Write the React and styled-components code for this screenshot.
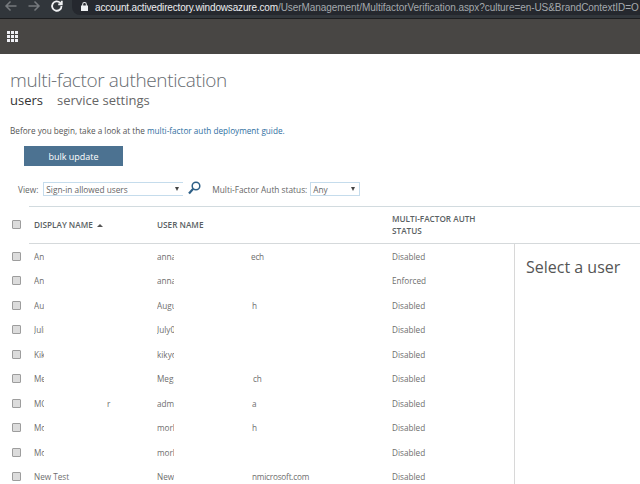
import React from "react";
import styled, { createGlobalStyle } from "styled-components";

const Global = createGlobalStyle`
  html, body { margin: 0; padding: 0; background: #fff; }
  body { width: 640px; height: 484px; overflow: hidden; font-family: "Open Sans", "Noto Sans", sans-serif; }
`;

const Page = styled.div`
  width: 640px;
  height: 484px;
  overflow: hidden;
  display: flex;
  flex-direction: column;
`;

const BrowserBar = styled.div`
  height: 19px;
  flex: none;
  background: #31363b;
  border-bottom: 1px solid #1c1d1f;
  box-sizing: border-box;
  display: flex;
  align-items: flex-start;
  padding-left: 4px;
  gap: 9px;
  overflow: hidden;
`;

const NavIcon = styled.svg`
  width: 14px;
  height: 14px;
  margin-top: 0;
  flex: none;
  fill: none;
  stroke: ${(p) => p.$color};
  stroke-width: ${(p) => p.$weight};
`;

const AddressBar = styled.div`
  height: 15px;
  margin-left: -1px;
  flex: 1;
  min-width: 0;
  background: #25282e;
  border-radius: 0 0 0 8px;
  display: flex;
  align-items: center;
  padding-left: 9px;
  white-space: nowrap;
  font-family: "Liberation Sans", sans-serif;
  font-size: 10px;
  letter-spacing: -0.06px;
  color: #a4a8ad;
  overflow: hidden;
`;

const Lock = styled.svg`
  width: 7px;
  height: 9px;
  flex: none;
  margin: -2px 7px 0 0;
  fill: #eef0f2;
`;

const Host = styled.span`
  color: #eceef0;
  letter-spacing: -0.16px;
`;

const TopBar = styled.div`
  height: 35px;
  flex: none;
  background: #484644;
  display: flex;
  align-items: center;
  padding-left: 7px;
`;

const Waffle = styled.div`
  display: grid;
  grid-template-columns: repeat(3, 3px);
  grid-auto-rows: 3px;
  gap: 1px;
  & > i { background: #efeff4; display: block; }
`;

const Content = styled.div`
  flex: 1;
  min-height: 0;
  display: flex;
  flex-direction: column;
  background: #fff;
`;

const Title = styled.h1`
  margin: 16px 0 0 10px;
  font-weight: 300;
  font-size: 19px;
  letter-spacing: -0.37px;
  line-height: 20px;
  color: #666b70;
`;

const Tabs = styled.div`
  display: flex;
  gap: 14px;
  margin: 0 0 0 10px;
  height: 19px;
  align-items: center;
`;

const Tab = styled.span`
  font-size: 13px;
  line-height: 18px;
  font-weight: 400;
  color: ${(p) => (p.$active ? "#333" : "#666")};
`;

const Intro = styled.p`
  margin: 16px 0 0 10px;
  font-size: 8.2px;
  line-height: 12px;
  color: #555;
`;

const Guide = styled.a`
  color: #2f6f9f;
`;

const BulkButton = styled.button`
  margin: 9px 0 0 24px;
  width: 99px;
  height: 20px;
  padding: 0;
  border: 0;
  background: #4c7291;
  color: #fff;
  font: 400 9px "Open Sans", sans-serif;
`;

const Filters = styled.div`
  display: flex;
  align-items: center;
  margin: 15px 0 0 18px;
  height: 16px;
  font-size: 8.3px;
  color: #666;
`;

const Select = styled.div`
  box-sizing: border-box;
  width: ${(p) => p.$w}px;
  height: 14px;
  margin-left: ${(p) => p.$ml}px;
  border: 1px solid #c5dcec;
  ${(p) => p.$open && "border-right: 0;"}
  display: flex;
  align-items: center;
  justify-content: space-between;
  padding: 0 4px 0 2px;
  color: #666;
`;

const Caret = styled.span`
  width: 0;
  height: 0;
  border-left: 2.5px solid transparent;
  border-right: 2.5px solid transparent;
  border-top: 4px solid #444;
`;

const Magnifier = styled.svg`
  width: 13px;
  height: 14px;
  margin: -3px 11px 0 5px;
  fill: none;
  stroke: #2d5f86;
  stroke-width: 1.5;
  flex: none;
`;

const TableHead = styled.div`
  margin: 9px 0 0 29px;
  height: 38px;
  flex: none;
  border-top: 1px solid #d2dbdf;
  border-bottom: 1px solid #d5d9db;
  display: grid;
  grid-template-columns: 5px 123px 235px 1fr;
  align-items: center;
  font-size: 8.2px;
  font-weight: 600;
  color: #5a5f63;
  box-sizing: border-box;
  position: relative;
`;

const HeadLabel = styled.span`
  line-height: 12px;
  display: flex;
  align-items: center;
  gap: 4px;
`;

const StackLabel = styled.span`
  line-height: 12px;
`;

const SortCaret = styled.span`
  width: 0;
  height: 0;
  border-left: 3px solid transparent;
  border-right: 3px solid transparent;
  border-bottom: 3px solid #555;
`;

const Box = styled.span`
  display: block;
  box-sizing: border-box;
  width: 9px;
  height: 9px;
  border: 1px solid #9d9d9d;
  border-radius: 1px;
  background: #dcdcdc;
  flex: none;
`;

const HeadBox = styled(Box)`
  position: absolute;
  left: -17px;
  top: 13px;
`;

const Body = styled.div`
  flex: 1;
  min-height: 0;
  display: flex;
`;

const Rows = styled.div`
  width: 515px;
  flex: none;
  box-sizing: border-box;
  border-right: 1px solid #d8d8d8;
`;

const Row = styled.div`
  height: 24.5px;
  display: grid;
  grid-template-columns: 34px 123px 235px 1fr;
  align-items: center;
  font-size: 8.2px;
  color: #6e6e6e;
`;

const BoxCell = styled.div`
  padding-left: 12px;
`;

const Cell = styled.div`
  display: flex;
  white-space: nowrap;
`;

const Clip = styled.span`
  width: ${(p) => p.$w}px;
  overflow: hidden;
  flex: none;
`;

const Tail = styled.span`
  margin-left: ${(p) => p.$gap}px;
  letter-spacing: -0.2px;
`;

const Side = styled.div`
  flex: 1;
  padding: 12px 0 0 11px;
  font-size: 16px;
  line-height: 22px;
  color: #555;
  white-space: nowrap;
  overflow: hidden;
`;

const users = [
  { n: "Anna Smith", u: "annasmith", t: "ech", g: 77, s: "Disabled" },
  { n: "Anna Jones", u: "annajones", s: "Enforced" },
  { n: "August Lee", u: "August", t: "h", g: 78, s: "Disabled" },
  { n: "Julia Ray", u: "July001", s: "Disabled" },
  { n: "Kiko Dean", u: "kikyou", s: "Disabled" },
  { n: "Megan Bowen", u: "MeganB", t: "ch", g: 79, s: "Disabled" },
  { n: "MOD Admin", nt: "r", u: "admin01", t: "a", g: 78, s: "Disabled" },
  { n: "Morgan Hill", u: "morlan", t: "h", g: 78, s: "Disabled" },
  { n: "Morgan Dale", u: "morlan", s: "Disabled" },
  { n: "New Test", full: true, u: "NewTest", t: "nmicrosoft.com", g: 78, s: "Disabled" },
];

export default function App() {
  return (
    <Page>
      <Global />
      <BrowserBar>
        <NavIcon $color="#767a7e" $weight="1.5" viewBox="0 0 14 14"><path d="M12.500 6H2M6.500 1.500 2 6l4.500 4.500" /></NavIcon>
        <NavIcon $color="#767a7e" $weight="1.5" viewBox="0 0 14 14"><path d="M1.500 6H12M7.500 1.500 12 6l-4.500 4.500" /></NavIcon>
        <NavIcon $color="#f0f1f3" $weight="1.8" viewBox="0 0 14 14"><path d="M11.500 6a4.700 4.700 0 1 1-1.400-3.300L11.500 4M11.800 .8v3.600H8.200" /></NavIcon>
        <AddressBar>
          <Lock viewBox="0 0 7 9"><path d="M0 3.500h7V9H0zM1.200 3.500V2.300a2.300 2.300 0 0 1 4.600 0v1.200h-1V2.300a1.300 1.300 0 0 0-2.600 0v1.200z" /></Lock>
          <Host>account.activedirectory.windowsazure.com</Host>
          /UserManagement/MultifactorVerification.aspx?culture=en-US&amp;BrandContextID=O
        </AddressBar>
      </BrowserBar>
      <TopBar>
        <Waffle>{Array.from({ length: 9 }, (_, i) => <i key={i} />)}</Waffle>
      </TopBar>
      <Content>
        <Title>multi-factor authentication</Title>
        <Tabs>
          <Tab $active>users</Tab>
          <Tab>service settings</Tab>
        </Tabs>
        <Intro>Before you begin, take a look at the <Guide>multi-factor auth deployment guide.</Guide></Intro>
        <BulkButton>bulk update</BulkButton>
        <Filters>
          View:
          <Select $w={140} $ml={5} $open>Sign-in allowed users<Caret /></Select>
          <Magnifier viewBox="0 0 13 14"><circle cx="8" cy="5" r="3.800" /><path d="M5.200 7.800 1 12.500" strokeWidth="2.200" /></Magnifier>
          Multi-Factor Auth status:
          <Select $w={50} $ml={3}>Any<Caret /></Select>
        </Filters>
        <TableHead>
          <HeadBox />
          <span />
          <HeadLabel>DISPLAY NAME <SortCaret /></HeadLabel>
          <HeadLabel>USER NAME</HeadLabel>
          <StackLabel>MULTI-FACTOR AUTH<br />STATUS</StackLabel>
        </TableHead>
        <Body>
          <Rows>
            {users.map((x, i) => (
              <Row key={i}>
                <BoxCell><Box /></BoxCell>
                <Cell>
                  {x.full ? x.n : <Clip $w={10}>{x.n}</Clip>}
                  {x.nt && <Tail $gap={63}>{x.nt}</Tail>}
                </Cell>
                <Cell>
                  <Clip $w={17}>{x.u}</Clip>
                  {x.t && <Tail $gap={x.g}>{x.t}</Tail>}
                </Cell>
                <Cell>{x.s}</Cell>
              </Row>
            ))}
          </Rows>
          <Side>Select a user</Side>
        </Body>
      </Content>
    </Page>
  );
}
